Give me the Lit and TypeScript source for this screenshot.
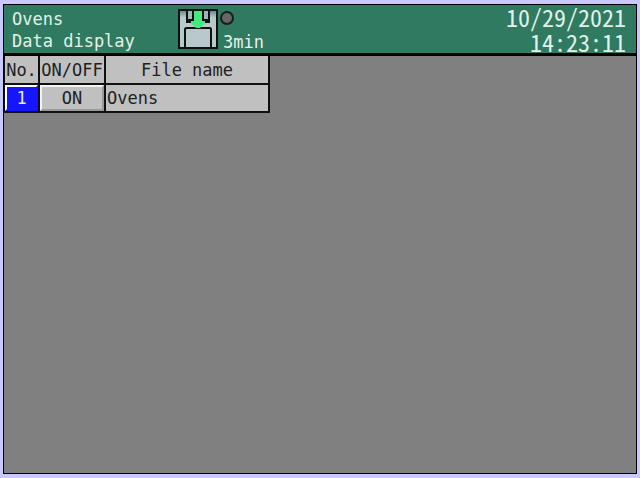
import { LitElement, html, css } from "lit";
import { customElement, property } from "lit/decorators.js";

@customElement("save-indicator")
class SaveIndicator extends LitElement {
  @property() interval = "";
  static styles = css`
    :host { display: flex; align-items: flex-start; }
    .disk { display: block; width: 40px; height: 40px; flex: none; }
    .side { display: flex; flex-direction: column; padding: 2px 0 0 2px; }
    .lamp { display: block; width: 14px; height: 14px; }
    .text { line-height: 22px; margin: 6px 0 0 3px; }
  `;
  render() {
    return html`
      <svg class="disk" viewBox="0 0 40 40" aria-hidden="true">
        <defs>
          <linearGradient id="metal" x1="0" y1="0" x2="0" y2="1">
            <stop offset="0" stop-color="#5d7f8e" />
            <stop offset=".2" stop-color="#b9c8ca" />
            <stop offset="1" stop-color="#b9c8ca" />
          </linearGradient>
        </defs>
        <rect x="1" y="1" width="38" height="38" fill="url(#metal)" stroke="#0c1210" stroke-width="2" />
        <path d="M8 1h24v13h-24z" fill="#0c1210" />
        <path d="M10 2h4v8h-4zM26 2h4v8h-4z" fill="#a3b4b8" />
        <path d="M13 14h14v4h-14z" fill="#b9c8ca" />
        <path d="M7 39V20l1-1h24l1 1v19z" fill="#b9c8ca" stroke="#0c1210" stroke-width="2" />
        <path d="M16 2h8v10h3v2l-5 5h-4l-5-5v-2h3z" fill="#43ea7c" />
      </svg>
      <div class="side">
        <svg class="lamp" viewBox="0 0 14 14" aria-hidden="true">
          <circle cx="7" cy="7" r="6" fill="#666" stroke="#142019" stroke-width="2" />
        </svg>
        <span class="text">${this.interval}</span>
      </div>
    `;
  }
}

@customElement("app-root")
class AppRoot extends LitElement {
  static styles = css`
    :host {
      display: flex;
      box-sizing: border-box;
      min-height: 100vh;
      padding: 4px 3px;
      background: #c9c9ff;
      font: 17px/22px "DejaVu Sans Mono", monospace;
      color: #202020;
    }
    .screen {
      flex: 1;
      display: flex;
      flex-direction: column;
      align-items: stretch;
      border: 1px solid #000;
      background: #808080;
    }
    header {
      display: flex;
      justify-content: space-between;
      background: #2f7a60;
      color: #e2f2ea;
      border-bottom: 3px solid #000;
    }
    .left { display: flex; }
    .titles { width: 174px; box-sizing: border-box; padding: 3px 0 0 8px; }
    h1, p { margin: 0; font: inherit; }
    save-indicator { padding-top: 4px; }
    .clock {
      display: flex;
      flex-direction: column;
      margin: -1px 0;
      font: 24px/25px "Noto Sans CJK JP", monospace;
      font-feature-settings: "hwid";
      text-align: right;
      padding-right: 10px;
    }
    table {
      table-layout: fixed;
      width: 266px;
      border-collapse: separate;
      border-spacing: 0;
      background: #c0c0c0;
      border-left: 1px solid #101010;
    }
    .no { width: 35px; }
    .state { width: 66px; }
    th, td {
      box-sizing: border-box;
      height: 28px;
      padding: 0;
      font-weight: normal;
      white-space: nowrap;
      border-right: 2px solid #101010;
      border-bottom: 2px solid #101010;
    }
    th { height: 29px; }
    .file { text-align: left; padding-left: 1px; }
    button {
      display: block;
      box-sizing: border-box;
      width: 100%;
      height: 26px;
      margin: 0;
      padding: 0;
      border: 2px solid;
      border-color: #f4f4f4 #9a9a9a #9a9a9a #f4f4f4;
      background: #c0c0c0;
      color: inherit;
      font: inherit;
      border-radius: 0;
    }
    .index {
      background: #1515ff;
      color: #e8e8ff;
      border-color: #fff #1515ff #1515ff #fff;
    }
  `;
  render() {
    return html`
      <main class="screen">
        <header>
          <div class="left">
            <div class="titles"><h1>Ovens</h1><p>Data display</p></div>
            <save-indicator interval="3min"></save-indicator>
          </div>
          <div class="clock"><time>10/29/2021</time><time>14:23:11</time></div>
        </header>
        <table>
          <colgroup><col class="no" /><col class="state" /><col /></colgroup>
          <thead>
            <tr><th scope="col">No.</th><th scope="col">ON/OFF</th><th scope="col">File name</th></tr>
          </thead>
          <tbody>
            <tr>
              <td><button class="index">1</button></td>
              <td><button class="toggle">ON</button></td>
              <td class="file">Ovens</td>
            </tr>
          </tbody>
        </table>
      </main>
    `;
  }
}
